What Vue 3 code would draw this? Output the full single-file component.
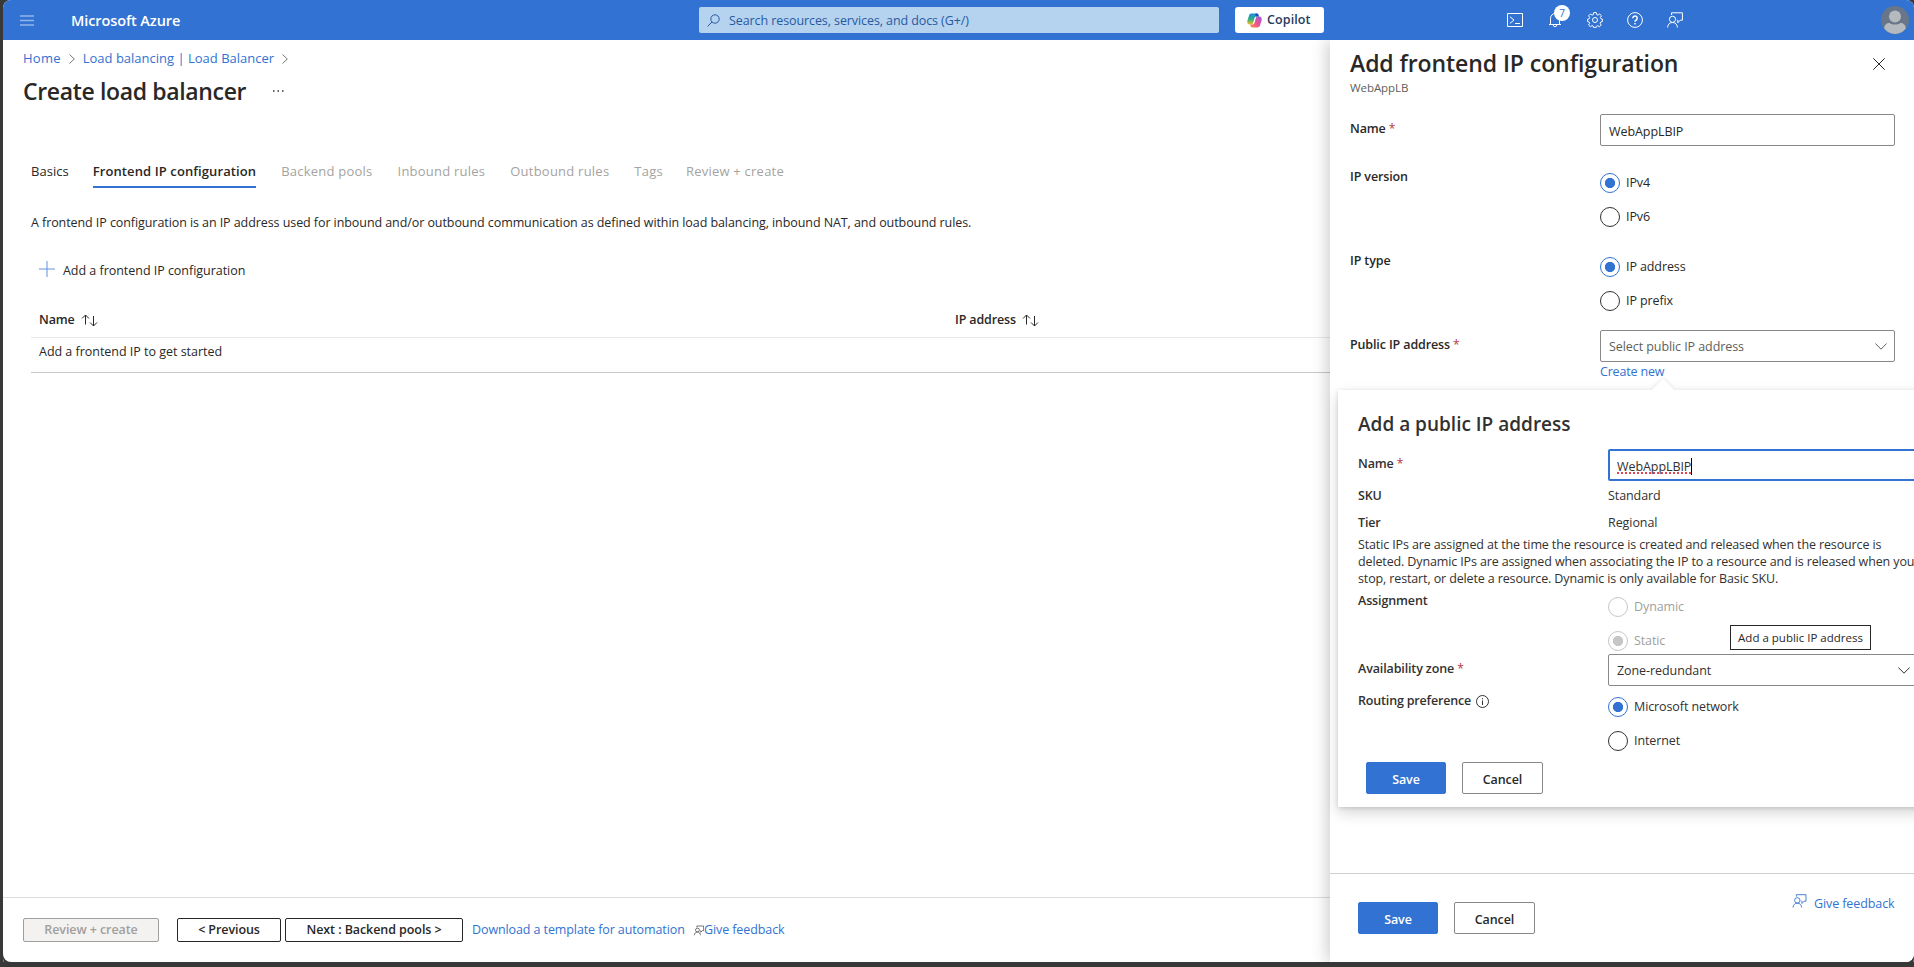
<script setup>
    import { ref } from 'vue';

    const search = ref('');
    const tabs = [
        { name: 'Basics', state: 'done', id: 'basics' },
        { name: 'Frontend IP configuration', state: 'active', id: 'frontend' },
        { name: 'Backend pools', id: 'backend' },
        { name: 'Inbound rules', id: 'inbound' },
        { name: 'Outbound rules', id: 'outbound' },
        { name: 'Tags', id: 'tags' },
        { name: 'Review + create', id: 'review' },
    ];
    const columns = ['Name', 'IP address'];

    const frontendName = ref('WebAppLBIP');
    const choices = [
        { label: 'IP version', options: ['IPv4', 'IPv6'], selected: 'IPv4' },
        { label: 'IP type', options: ['IP address', 'IP prefix'], selected: 'IP address' },
    ];
    const publicIpName = ref('WebAppLBIP');
</script>

<template>
    <div class="window">
        <header class="topbar">
            <svg class="menu" width="14" height="11" viewBox="0 0 14 11"><path d="M0 1h14M0 5.5h14M0 10h14" /></svg>
            <span class="brand">Microsoft Azure</span>
            <div class="search">
                <svg width="13" height="13" viewBox="0 0 13 13"><circle cx="8" cy="5" r="4.2" /><path d="M5 8L.6 12.4" /></svg>
                <span>{{ search || 'Search resources, services, and docs (G+/)' }}</span>
            </div>
            <button class="copilot">
                <svg width="15" height="15" viewBox="0 0 15 15">
                    <defs>
                        <linearGradient id="cool" x1="0" y1="0" x2="0" y2="1">
                            <stop offset="0" stop-color="#1b8fe0" /><stop offset=".5" stop-color="#2fae86" /><stop offset="1" stop-color="#f4c21c" />
                        </linearGradient>
                        <linearGradient id="warm" x1="1" y1="0" x2="0" y2="1">
                            <stop offset="0" stop-color="#9a5be8" /><stop offset=".5" stop-color="#ea4f93" /><stop offset="1" stop-color="#fb8a45" />
                        </linearGradient>
                    </defs>
                    <path d="M4.6.6h5.2c1 0 1.5.8 1.8 1.8l.4 1.2H9.4c-1 0-1.6.6-1.9 1.6L6.1 10c-.3 1-1 1.6-2 1.6H2.7C.6 11.6-.1 9.6.4 7.7L2 2.4C2.4 1.2 3.3.6 4.6.6z" fill="url(#cool)" />
                    <path d="M8.4.6h1.4c1 0 1.5.8 1.8 1.8l.4 1.2H8.6z" fill="#2348c4" />
                    <path d="M10.4 14.4H5.2c-1 0-1.5-.8-1.8-1.8L3 11.4h2.6c1 0 1.6-.6 1.9-1.6L8.9 5c.3-1 1-1.6 2-1.6h1.4c2.1 0 2.8 2 2.3 3.9L13 12.6c-.4 1.2-1.3 1.8-2.6 1.8z" fill="url(#warm)" />
                </svg>
                <span>Copilot</span>
            </button>
            <nav class="tools">
                <svg width="16" height="16" viewBox="0 0 16 16"><path d="M.5 1.5h15v13H.5zM3 4.8l4 3.2-4 3.4M8 11.5h5" /></svg>
                <span class="bell">
                    <svg width="16" height="16" viewBox="0 0 16 16"><path d="M3.5 12.5V6.5a4.5 5 0 0 1 9 0v6M2 12.5h12M6.3 13a1.7 1.7 0 0 0 3.4 0" /></svg>
                    <span class="count">7</span>
                </span>
                <svg width="16" height="16" viewBox="0 0 16 16">
                    <path d="M6.7.6h2.6l.4 2 1.3.5 1.7-1.1 1.8 1.8-1.2 1.7.6 1.3 1.5.4v2.4l-1.7.4-.6 1.3 1.1 1.7-1.8 1.8-1.7-1.1-1.3.5-.4 1.5H6.7l-.4-1.6-1.3-.5-1.7 1.1L1.5 13l1.2-1.7-.6-1.3-1.5-.4V7.2l1.6-.4.5-1.3-1.1-1.7L3.4 2l1.7 1.1 1.3-.5z" />
                    <circle cx="8" cy="8" r="2.5" />
                </svg>
                <svg width="16" height="16" viewBox="0 0 16 16"><circle cx="8" cy="8" r="7.4" /><path class="bold" d="M5.8 6.2a2.2 2.2 0 1 1 3.4 1.8c-.8.5-1.2.8-1.2 1.8M8 11v1.4" /></svg>
                <svg width="16" height="16" viewBox="0 0 16 16"><path d="M4.5 3V.8h10.9v7.4h-2.2l-2.4 2.6V8.2h-.6M.6 15.5c.2-3.2 2-5 4.9-5s4.7 1.8 4.9 5" /><circle cx="5.5" cy="7.3" r="3.1" /></svg>
            </nav>
            <svg class="avatar" width="28" height="28" viewBox="0 0 28 28">
                <circle cx="14" cy="14" r="14" fill="#69768a" />
                <circle cx="14" cy="10.5" r="6" fill="#b5babf" />
                <path d="M3.2 22.5c0-3.5 2.5-5.5 5.3-5.5 1.6 1 3.4 1.6 5.5 1.6s3.9-.6 5.5-1.6c2.8 0 5.3 2 5.3 5.5A13.900 13.900 0 0 1 14 28 13.900 13.900 0 0 1 3.2 22.5z" fill="#b5babf" />
            </svg>
        </header>

        <main class="page">
            <div class="content">
                <div class="crumbs">
                    <a class="home">Home</a>
                    <svg width="6" height="10" viewBox="0 0 6 10"><path d="M.5.5L5.3 5 .5 9.5" /></svg>
                    <a>Load balancing | Load Balancer</a>
                    <svg width="6" height="10" viewBox="0 0 6 10"><path d="M.5.5L5.3 5 .5 9.5" /></svg>
                </div>
                <div class="heading">
                    <h1>Create load balancer</h1>
                    <svg width="11" height="2" viewBox="0 0 11 2"><path d="M0 0h1.5v2H0zM4.500 0H6v2H4.500zM9 0h1.500v2H9z" /></svg>
                </div>
                <div class="tabs">
                    <span v-for="tab in tabs" :key="tab.id" class="tab" :class="[tab.state, tab.id]">{{ tab.name }}</span>
                </div>
                <p class="intro">A frontend IP configuration is an IP address used for inbound and/or outbound communication as defined within load balancing, inbound NAT, and outbound rules.</p>
                <div class="command">
                    <svg width="16" height="16" viewBox="0 0 16 16"><path d="M8 0v16M0 8h16" /></svg>
                    <span>Add a frontend IP configuration</span>
                </div>
                <div class="table">
                    <div class="thead">
                        <div v-for="column in columns" :key="column" class="th">
                            <span>{{ column }}</span>
                            <svg width="17" height="13" viewBox="0 0 17 13"><path d="M4.5 10.5V1M1 4.5L4.5 1 8 4.5M12.5 2v10M9 8.500l3.500 3.500L16 8.500" /></svg>
                        </div>
                    </div>
                    <div class="empty">Add a frontend IP to get started</div>
                </div>
            </div>
            <footer class="wizard">
                <button class="to-review" disabled>Review + create</button>
                <button class="previous">&lt; Previous</button>
                <button class="next">Next : Backend pools &gt;</button>
                <a class="template">Download a template for automation</a>
                <svg width="10" height="11" viewBox="0 0 16 16"><path d="M4.5 3V.8h10.9v7.4h-2.2l-2.4 2.6V8.2h-.6M.6 15.5c.2-3.2 2-5 4.9-5s4.7 1.8 4.9 5" /><circle cx="5.5" cy="7.3" r="3.1" /></svg>
                <a class="feedback">Give feedback</a>
            </footer>
        </main>

        <aside class="panel">
            <div class="panel-head">
                <h2>Add frontend IP configuration</h2>
                <svg width="12" height="12" viewBox="0 0 12 12"><path d="M.3.3l11.4 11.4M11.7.3L.3 11.7" /></svg>
            </div>
            <div class="subtitle">WebAppLB</div>
            <div class="panel-body">
                <div class="row name-row">
                    <label class="pushed">Name <i>*</i></label>
                    <div class="field">{{ frontendName }}</div>
                </div>
                <div v-for="choice in choices" :key="choice.label" class="row choice-row">
                    <label>{{ choice.label }}</label>
                    <div class="radios">
                        <span v-for="option in choice.options" :key="option" class="radio" :class="{ on: option === choice.selected }"><b></b>{{ option }}</span>
                    </div>
                </div>
                <div class="row public-row">
                    <label class="pushed">Public IP address <i>*</i></label>
                    <div>
                        <div class="field placeholder">
                            <span>Select public IP address</span>
                            <svg width="12" height="7" viewBox="0 0 12 7"><path d="M.4.5L6 6.2 11.6.5" /></svg>
                        </div>
                        <a class="create">Create new</a>
                    </div>
                </div>
            </div>
            <div class="panel-foot">
                <button class="save">Save</button>
                <button class="cancel">Cancel</button>
                <svg width="15" height="14" viewBox="0 0 16 16"><path d="M4.5 3V.8h10.9v7.4h-2.2l-2.4 2.6V8.2h-.6M.6 15.5c.2-3.2 2-5 4.9-5s4.7 1.8 4.9 5" /><circle cx="5.5" cy="7.3" r="3.1" /></svg>
                <a class="feedback">Give feedback</a>
            </div>

            <section class="callout">
                <div class="beak"></div>
                <h3>Add a public IP address</h3>
                <div class="row ip-name">
                    <label class="pushed">Name <i>*</i></label>
                    <div class="field focused"><span class="typed">{{ publicIpName }}</span><span class="caret"></span></div>
                </div>
                <div class="row sku"><label>SKU</label><span>Standard</span></div>
                <div class="row tier"><label>Tier</label><span>Regional</span></div>
                <p class="note">
                    Static IPs are assigned at the time the resource is created and released when the resource is<br>
                    deleted. Dynamic IPs are assigned when associating the IP to a resource and is released when you<br>
                    stop, restart, or delete a resource. Dynamic is only available for Basic SKU.
                </p>
                <div class="row assignment">
                    <label>Assignment</label>
                    <div class="radios">
                        <span class="radio off"><b></b>Dynamic</span>
                        <span class="radio off on"><b></b>Static</span>
                    </div>
                </div>
                <div class="row zone">
                    <label class="pushed">Availability zone <i>*</i></label>
                    <div class="field">
                        <span>Zone-redundant</span>
                        <svg width="12" height="7" viewBox="0 0 12 7"><path d="M.4.5L6 6.2 11.6.5" /></svg>
                    </div>
                </div>
                <div class="row routing">
                    <label>Routing preference
                        <svg width="13" height="13" viewBox="0 0 13 13"><circle cx="6.5" cy="6.5" r="6" /><path d="M6.5 5.5V10M6.5 3.2v1.2" /></svg>
                    </label>
                    <div class="radios">
                        <span class="radio on"><b></b>Microsoft network</span>
                        <span class="radio"><b></b>Internet</span>
                    </div>
                </div>
                <div class="actions">
                    <button class="save">Save</button>
                    <button class="cancel">Cancel</button>
                </div>
                <div class="tooltip">Add a public IP address</div>
            </section>
        </aside>
    </div>
</template>

<style>
    body {
        margin: 0;
        overflow: hidden;
        background: #383838;
    }
</style>

<style scoped>
    * {
        box-sizing: border-box;
    }

    .window {
        display: grid;
        grid-template: 40px 922px / 1327px 584px;
        width: 1911px;
        height: 962px;
        margin-left: 3px;
        border-radius: 8px;
        overflow: hidden;
        background: white;
        color: #292827;
        font-family: "Open Sans", "Noto Sans", sans-serif;
        font-size: 12.5px;
        letter-spacing: -.075px;
        line-height: 18px;
        white-space: nowrap;
        box-shadow: 0 4px #383838, 0 5px #c9c6cc;
    }

    svg {
        display: block;
        flex: none;
        fill: none;
        stroke: currentColor;
    }

    a {
        color: #3172d2;
    }

    h1, h2, h3, p {
        margin: 0;
        font-weight: 600;
    }

    button {
        padding: 0;
        border: 1px solid #292827;
        border-radius: 2px;
        background: white;
        color: #292827;
        font: inherit;
        font-weight: 600;
        letter-spacing: inherit;
    }

    .topbar {
        grid-column: 1 / 3;
        display: flex;
        align-items: center;
        padding-left: 17px;
        background: #3172d2;
        color: white;
    }

    .menu {
        color: #93b6e8;
        stroke-width: 1.6;
    }

    .brand {
        width: 109px;
        margin: 1px 519px 0 37px;
        font-size: 14.5px;
        font-weight: 600;
        letter-spacing: -.1px;
    }

    .search {
        display: flex;
        align-items: center;
        gap: 9px;
        width: 520px;
        height: 26px;
        padding-left: 8px;
        border-radius: 2px;
        background: #b5d3ef;
        color: #28599f;
        letter-spacing: -.09px;
    }

    .search span {
        padding-top: 1px;
    }

    .copilot {
        display: flex;
        align-items: center;
        gap: 5px;
        width: 89px;
        height: 26px;
        margin-left: 16px;
        padding-left: 12px;
        border: 0;
        border-radius: 3px;
        color: #243a5e;
        letter-spacing: .1px;
    }

    .copilot svg {
        stroke: none;
    }

    .tools {
        display: flex;
        gap: 24px;
        margin-left: 183px;
    }

    .tools .bold {
        stroke-width: 1.5;
    }

    .bell {
        position: relative;
    }

    .count {
        position: absolute;
        top: -7px;
        left: 7px;
        width: 16px;
        height: 16px;
        border-radius: 50%;
        background: white;
        color: #3172d2;
        font-size: 10px;
        line-height: 16px;
        text-align: center;
    }

    .avatar {
        margin-left: 198px;
        stroke: none;
    }

    .page {
        display: flex;
        flex-direction: column;
    }

    .content {
        flex: 1;
        padding: 9px 0 0 20px;
    }

    .crumbs {
        display: flex;
        align-items: center;
        gap: 8px;
        height: 18px;
        color: #777;
        font-size: 13px;
    }

    .crumbs a {
        letter-spacing: 0;
    }

    .crumbs .home {
        letter-spacing: .25px;
    }

    .crumbs svg {
        margin-top: 2px;
    }

    .heading {
        display: flex;
        align-items: center;
        height: 32px;
        margin-top: 8px;
        color: #666;
    }

    .heading h1 {
        width: 250px;
        color: #292827;
        font-size: 23px;
        letter-spacing: -.35px;
    }

    .heading svg {
        fill: currentColor;
        stroke: none;
    }

    .tabs {
        display: flex;
        gap: 25px;
        margin: 55px 0 0 8px;
        color: #a5a3a1;
        font-size: 13px;
        letter-spacing: .23px;
    }

    .tab {
        height: 26px;
    }

    .done {
        margin-right: -1px;
        color: #292827;
        letter-spacing: .03px;
    }

    .active {
        border-bottom: 2px solid #3172d2;
        color: #292827;
        font-weight: 600;
        letter-spacing: .1px;
    }

    .tags {
        margin-right: -2px;
    }

    .intro {
        margin: 26px 0 0 8px;
        font-weight: 400;
    }

    .command {
        display: flex;
        align-items: center;
        gap: 8px;
        margin: 30px 0 0 16px;
        letter-spacing: -.03px;
    }

    .command svg {
        margin-top: -4px;
        color: #5e92de;
    }

    .table {
        margin: 24px 0 0 8px;
        border-bottom: 1px solid #c8c8c8;
    }

    .thead {
        display: grid;
        grid-template-columns: 916px 1fr;
        height: 34px;
        padding: 7px 0 0 8px;
        border-bottom: 1px solid #e8e8e8;
        font-weight: 600;
    }

    .th {
        display: flex;
        align-items: center;
        gap: 6px;
        height: 18px;
        letter-spacing: -.15px;
    }

    .empty {
        height: 34px;
        padding: 5px 8px;
        letter-spacing: -.02px;
    }

    .wizard {
        display: flex;
        align-items: center;
        height: 65px;
        padding: 0 0 0 20px;
        border-top: 1px solid #ddd;
    }

    .wizard button {
        height: 24px;
    }

    .wizard .to-review {
        width: 136px;
        margin-right: 18px;
        border-color: #a19f9d;
        background: #f3f2f1;
        color: #a19f9d;
    }

    .wizard .previous {
        width: 104px;
        margin-right: 4px;
    }

    .wizard .next {
        width: 178px;
        margin-right: 9px;
    }

    .template {
        width: 222px;
        letter-spacing: -.1px;
    }

    .feedback {
        letter-spacing: -.1px;
    }

    .panel {
        position: relative;
        display: flex;
        flex-direction: column;
        background: white;
        box-shadow: -2px 0 16px rgba(0, 0, 0, .22);
        clip-path: inset(0 0 0 -30px);
    }

    .panel-head {
        display: flex;
        align-items: center;
        justify-content: space-between;
        height: 32px;
        margin: 8px 29px 0 20px;
    }

    .panel-head h2 {
        margin-top: -2px;
        font-size: 23px;
        letter-spacing: -.08px;
    }

    .subtitle {
        height: 34px;
        padding-left: 20px;
        color: #605e5c;
        font-size: 11.5px;
        line-height: 16px;
    }

    .panel-body {
        flex: 1;
        padding-left: 20px;
    }

    .row {
        display: grid;
        grid-template-columns: 250px 1fr;
        align-items: start;
    }

    label {
        font-weight: 600;
        letter-spacing: -.13px;
    }

    label i {
        color: #b5373c;
        font-size: 12px;
        font-style: normal;
        font-weight: 400;
    }

    .pushed {
        padding-top: 6px;
    }

    .field {
        display: flex;
        align-items: center;
        justify-content: space-between;
        width: 295px;
        height: 32px;
        padding: 3px 7px 0 8px;
        border: 1px solid #8a8886;
        border-radius: 2px;
        background: white;
    }

    .placeholder {
        padding-top: 1px;
        color: #605e5c;
    }

    .name-row {
        height: 53px;
    }

    .choice-row {
        height: 84px;
    }

    .choice-row label {
        padding-top: 1px;
    }

    .choice-row + .public-row {
        margin-top: -5px;
    }

    .radios {
        display: flex;
        flex-direction: column;
        gap: 14px;
        padding-top: 6px;
    }

    .radio {
        display: flex;
        align-items: center;
        gap: 6px;
        height: 20px;
        letter-spacing: -.1px;
    }

    .radio b {
        width: 20px;
        height: 20px;
        border: 1px solid #323130;
        border-radius: 50%;
    }

    .radio.on b {
        border-color: #3172d2;
        background: radial-gradient(circle, #3172d2 4.8px, transparent 5.4px);
    }

    .radio.off {
        color: #a19f9d;
    }

    .radio.off b {
        border-color: #c8c6c4;
    }

    .radio.off.on b {
        background: radial-gradient(circle, #c8c6c4 4.8px, transparent 5.4px);
    }

    .create {
        display: block;
        width: 70px;
        padding-top: 1px;
        letter-spacing: -.18px;
    }

    .panel-foot {
        display: flex;
        align-items: flex-start;
        height: 89px;
        padding: 28px 0 0 28px;
        border-top: 1px solid #d2d0ce;
    }

    .save, .cancel {
        width: 80px;
        height: 32px;
        padding-top: 4px;
        margin-right: 16px;
        border-color: #8a8886;
    }

    .cancel {
        width: 81px;
    }

    .save {
        border-color: #3172d2;
        background: #3172d2;
        color: white;
    }

    .panel-foot svg {
        margin: -8px 7px 0 241px;
        color: #3172d2;
    }

    .panel-foot .feedback {
        margin-top: -7px;
    }

    .callout {
        position: absolute;
        top: 350px;
        left: 8px;
        width: 620px;
        height: 417px;
        padding: 20px 0 0 20px;
        background: white;
        box-shadow: 0 6px 14px rgba(0, 0, 0, .16), 0 1px 4px rgba(0, 0, 0, .14);
        color: #323130;
    }

    .beak {
        position: absolute;
        top: -8px;
        left: 317px;
        width: 16px;
        height: 16px;
        background: white;
        box-shadow: -1px -1px 4px rgba(0, 0, 0, .08);
        transform: rotate(45deg);
        clip-path: polygon(-4px -4px, 20px -4px, -4px 20px);
    }

    .callout h3 {
        height: 39px;
        font-size: 19px;
        letter-spacing: 0;
        line-height: 28px;
    }

    .callout .field {
        width: 310px;
    }

    .callout .focused {
        justify-content: flex-start;
        padding-left: 7px;
        border: 2px solid #3172d2;
    }

    .typed {
        text-decoration: underline dotted #e34553 1.5px;
        text-underline-offset: 2px;
        text-decoration-skip-ink: none;
    }

    .caret {
        width: 1px;
        height: 17px;
        background: black;
    }

    .ip-name {
        height: 38px;
    }

    .sku, .tier {
        height: 27px;
    }

    .note {
        height: 56px;
        margin-top: -5px;
        font-weight: 400;
        letter-spacing: -.13px;
        line-height: 17px;
    }

    .assignment {
        height: 61px;
    }

    .assignment .radios {
        padding-top: 5px;
    }

    .zone {
        height: 38px;
        padding-top: 1px;
    }

    .callout .zone .field {
        padding-top: 1px;
    }

    .routing {
        height: 71px;
    }

    .routing label {
        display: flex;
        align-items: center;
        gap: 5px;
        padding-top: 1px;
        letter-spacing: -.17px;
    }

    .actions {
        display: flex;
        margin-left: 8px;
    }

    .tooltip {
        position: absolute;
        top: 235px;
        left: 392px;
        width: 141px;
        height: 25px;
        border: 1px solid #292827;
        background: white;
        color: #292827;
        font-size: 11.5px;
        letter-spacing: 0;
        line-height: 23px;
        text-align: center;
    }
</style>
